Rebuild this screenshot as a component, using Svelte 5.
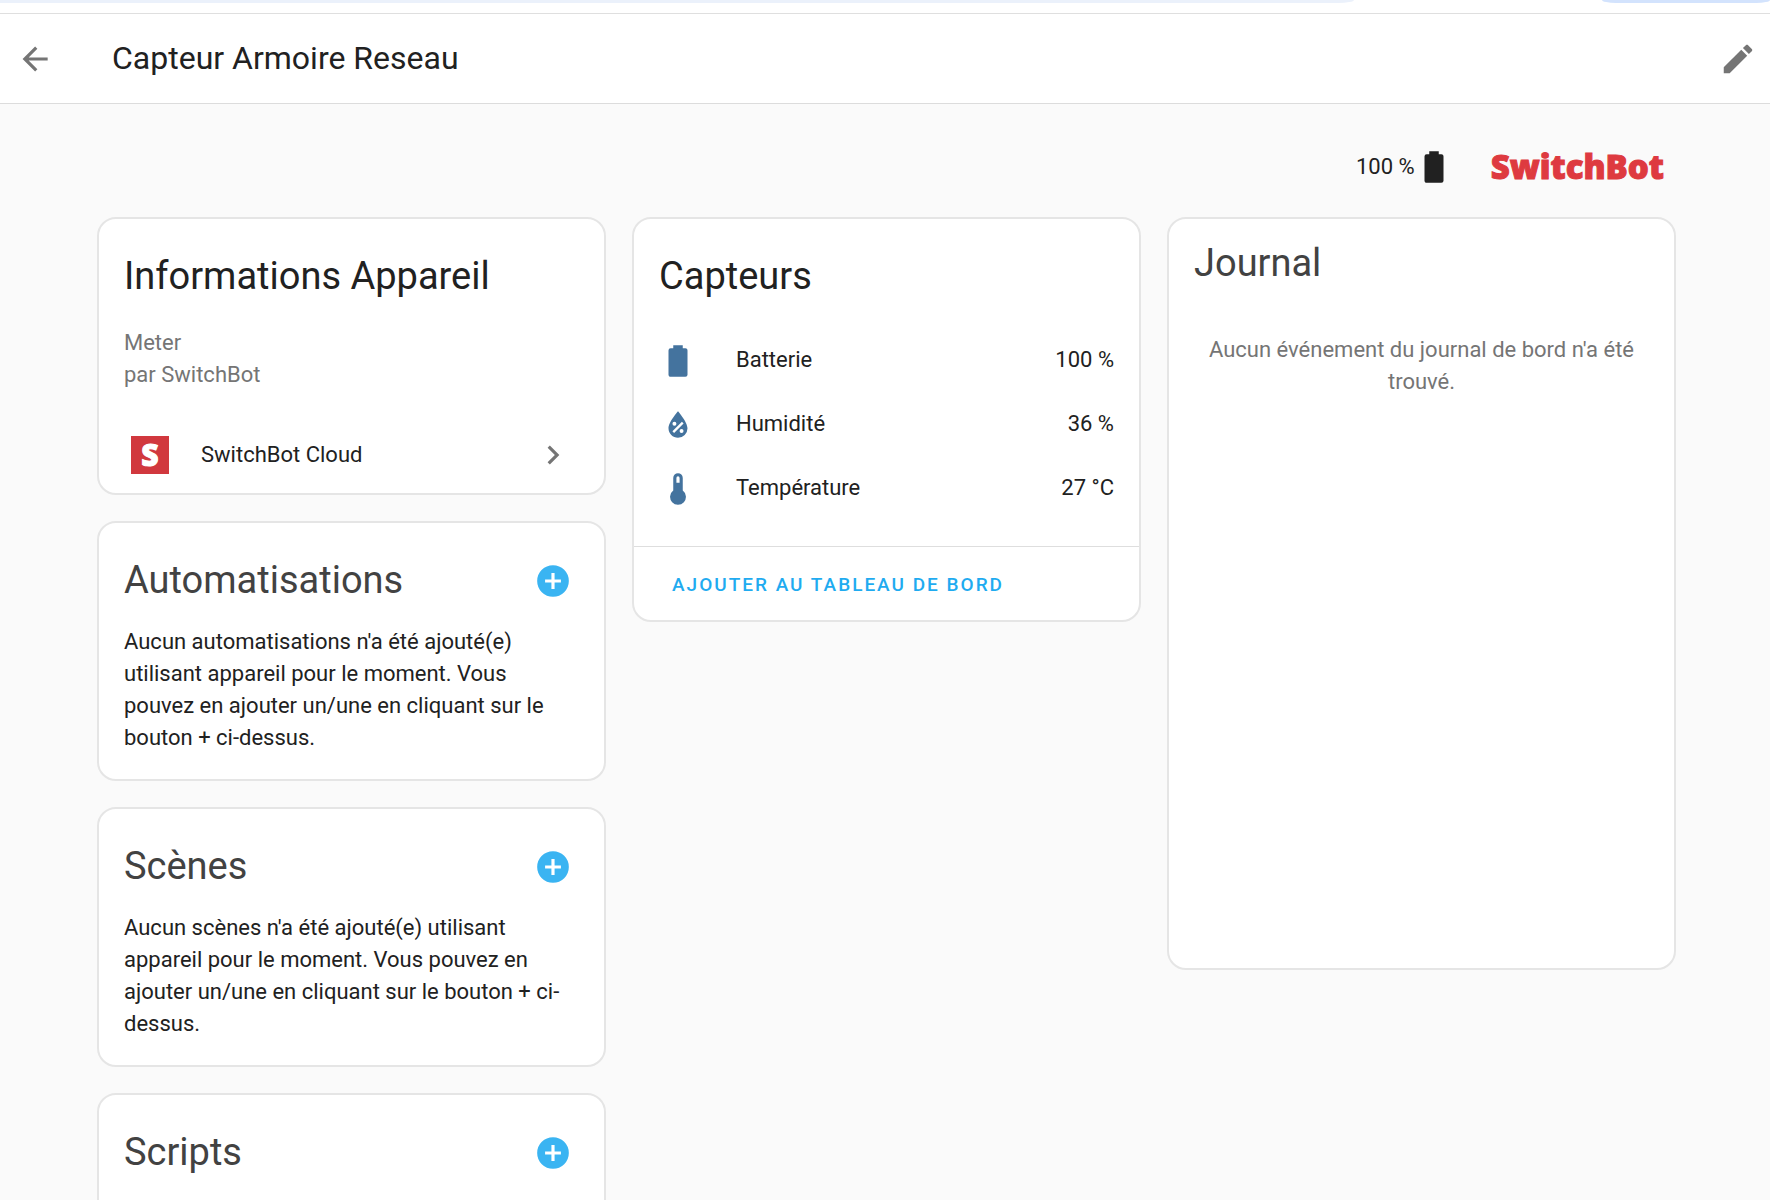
<script>
    const icons = {
        back: "M20,11V13H8L13.5,18.5L12.08,19.92L4.16,12L12.08,4.08L13.5,5.5L8,11H20Z",
        pencil: "M20.71,7.04C21.1,6.65 21.1,6 20.71,5.63L18.37,3.29C18,2.9 17.35,2.9 16.96,3.29L15.12,5.12L18.87,8.87M3,17.25V21H6.75L17.81,9.93L14.06,6.18L3,17.25Z",
        battery: "M16.67,4H15V2H9V4H7.33A1.33,1.33 0 0,0 6,5.33V20.67C6,21.4 6.6,22 7.33,22H16.67A1.33,1.33 0 0,0 18,20.67V5.33C18,4.6 17.4,4 16.67,4Z",
        humidity: "M12,3.25C12,3.25 6,10 6,14C6,17.32 8.69,20 12,20A6,6 0 0,0 18,14C18,10 12,3.25 12,3.25M14.47,9.97L15.53,11.03L9.53,17.03L8.47,15.97M9.75,10A1.25,1.25 0 0,1 11,11.25A1.25,1.25 0 0,1 9.75,12.5A1.25,1.25 0 0,1 8.5,11.25A1.25,1.25 0 0,1 9.75,10M14.25,14.5A1.25,1.25 0 0,1 15.5,15.75A1.25,1.25 0 0,1 14.25,17A1.25,1.25 0 0,1 13,15.75A1.25,1.25 0 0,1 14.25,14.5Z",
        thermometer: "M15,13V5A3,3 0 0,0 9,5V13A5,5 0 1,0 15,13M12,4A1,1 0 0,1 13,5V8H11V5A1,1 0 0,1 12,4Z",
        chevron: "M8.59,16.58L13.17,12L8.59,7.41L10,6L16,12L10,18L8.59,16.58Z",
        plus: "M17,13H13V17H11V13H7V11H11V7H13V11H17M12,2A10,10 0 0,0 2,12A10,10 0 0,0 12,22A10,10 0 0,0 22,12A10,10 0 0,0 12,2Z",
    };

    const sensors = [
        { icon: "battery", name: "Batterie", state: "100 %" },
        { icon: "humidity", name: "Humidité", state: "36 %" },
        { icon: "thermometer", name: "Température", state: "27 °C" },
    ];

    const related = [
        { title: "Automatisations", kind: "automatisations" },
        { title: "Scènes", kind: "scènes" },
        { title: "Scripts" },
    ];
</script>

{#snippet icon(name)}
    <svg class="icon" viewBox="0 0 24 24" aria-hidden="true">
        <path fill-rule="evenodd" d={icons[name]} />
    </svg>
{/snippet}

<div class="page">
    <div class="browser">
        <div class="address"></div>
        <div class="chip"></div>
    </div>

    <header>
        <button class="icon-button" aria-label="Retour">{@render icon("back")}</button>
        <h1>Capteur Armoire Reseau</h1>
        <button class="icon-button" aria-label="Modifier">{@render icon("pencil")}</button>
    </header>

    <main>
        <div class="summary">
            <div class="charge">
                <span>100 %</span>
                {@render icon("battery")}
            </div>
            <div class="logo">SwitchBot</div>
        </div>

        <div class="columns">
            <div class="column">
                <section class="card info">
                    <h2>Informations Appareil</h2>
                    <p class="model">Meter<br>par SwitchBot</p>
                    <a class="integration" href="#switchbot">
                        <span class="badge" aria-hidden="true">S</span>
                        <span class="name">SwitchBot Cloud</span>
                        {@render icon("chevron")}
                    </a>
                </section>

                {#each related as item}
                    <section class="card related">
                        <div class="head">
                            <h2>{item.title}</h2>
                            <button class="icon-button add" aria-label="Ajouter">{@render icon("plus")}</button>
                        </div>
                        <p>
                            {#if item.kind}
                                Aucun {item.kind} n'a été ajouté(e) utilisant appareil pour le moment.
                                Vous pouvez en ajouter un/une en cliquant sur le bouton + ci-dessus.
                            {/if}
                        </p>
                    </section>
                {/each}
            </div>

            <div class="column">
                <section class="card">
                    <h2>Capteurs</h2>
                    <ul>
                        {#each sensors as sensor}
                            <li>
                                {@render icon(sensor.icon)}
                                <span class="name">{sensor.name}</span>
                                <span>{sensor.state}</span>
                            </li>
                        {/each}
                    </ul>
                    <div class="actions">
                        <button>Ajouter au tableau de bord</button>
                    </div>
                </section>
            </div>

            <div class="column">
                <section class="card journal">
                    <h2>Journal</h2>
                    <p>Aucun événement du journal de bord n'a été trouvé.</p>
                </section>
            </div>
        </div>
    </main>
</div>

<style>
    :global(body) {
        background: #fafafa;
    }
    :global(html) {
        scrollbar-width: none;
    }
    .page {
        color: #212121;
        font-family: Roboto, "Noto Sans", sans-serif;
        font-size: 22px;
        line-height: 32px;
    }
    h1, h2, p, ul {
        margin: 0;
        padding: 0;
    }
    h1, h2 {
        font-weight: 400;
    }
    button {
        border: none;
        background: none;
        padding: 0;
        font-family: inherit;
        cursor: pointer;
    }
    .icon {
        display: block;
        flex: none;
        width: 38px;
        height: 38px;
        fill: currentColor;
    }
    .icon-button {
        flex: none;
        color: #757575;
    }

    .browser {
        display: flex;
        justify-content: space-between;
        height: 13px;
        background: white;
        border-bottom: 1px solid #dfdfdf;
    }
    .address {
        width: 76.5%;
        height: 3px;
        background: #ebf1fb;
        border-bottom-right-radius: 16px 3px;
    }
    .chip {
        width: 9.5%;
        height: 3px;
        background: #d3e3fd;
        border-radius: 0 0 14px 14px / 0 0 3px 3px;
    }

    header {
        display: flex;
        align-items: center;
        height: 89px;
        padding: 0 13px 0 16px;
        background: white;
        border-bottom: 1px solid #dcdcdc;
    }
    header h1 {
        flex: 1;
        padding: 0 0 2px 58px;
        font-size: 32px;
    }

    main {
        padding: 43px 94px 0 97px;
    }
    .summary {
        display: flex;
        justify-content: flex-end;
        align-items: center;
        gap: 38px;
        height: 40px;
        padding-right: 12px;
    }
    .charge {
        display: flex;
        align-items: center;
    }
    .logo {
        color: #de3a40;
        font-family: "Open Sans", sans-serif;
        font-size: 33px;
        font-weight: 800;
        -webkit-text-stroke: 1px #de3a40;
    }

    .columns {
        display: grid;
        grid-template-columns: repeat(3, 1fr);
        align-items: start;
        gap: 26px;
        margin-top: 30px;
    }
    .column {
        display: flex;
        flex-direction: column;
        gap: 26px;
    }
    .card {
        background: white;
        border: 2px solid #e5e5e5;
        border-radius: 19px;
    }
    .card h2 {
        padding: 19px 25px 0;
        font-size: 38px;
        line-height: 77px;
    }
    .info {
        padding-bottom: 6px;
    }
    .model {
        padding: 12px 25px 0;
        color: #757575;
    }
    .integration {
        display: flex;
        align-items: center;
        height: 64px;
        margin-top: 32px;
        padding: 0 32px;
        color: #212121;
        text-decoration: none;
    }
    .integration .name {
        flex: 1;
        padding-left: 32px;
    }
    .integration .icon {
        color: #757575;
    }
    .badge {
        width: 38px;
        height: 38px;
        background: #d1383e;
        color: white;
        font: 800 30px/38px "Open Sans", sans-serif;
        text-align: center;
        -webkit-text-stroke: 1px white;
    }

    .head {
        display: flex;
        justify-content: space-between;
        align-items: center;
        padding-right: 32px;
    }
    .related h2, .journal h2 {
        color: #424242;
    }
    .add {
        padding-top: 19px;
        color: #3ab4f2;
    }
    .related p {
        padding: 7px 25px 25px;
    }

    ul {
        padding: 13px 25px 26px;
        list-style: none;
    }
    li {
        display: flex;
        align-items: center;
        height: 64px;
    }
    li .icon {
        margin: 2px 39px 0 0;
        color: #44739e;
    }
    li .name {
        flex: 1;
    }
    .actions {
        padding: 8px 25px 7px;
        border-top: 1px solid #dedede;
    }
    .actions button {
        height: 58px;
        padding: 0 13px;
        color: #1fabf0;
        font-size: 19px;
        font-weight: 500;
        letter-spacing: 2px;
        text-transform: uppercase;
    }

    .journal h2 {
        padding: 6px 25px 0;
    }
    .journal p {
        min-height: 634px;
        padding: 32px 25px 0;
        color: #757575;
        text-align: center;
    }
</style>
